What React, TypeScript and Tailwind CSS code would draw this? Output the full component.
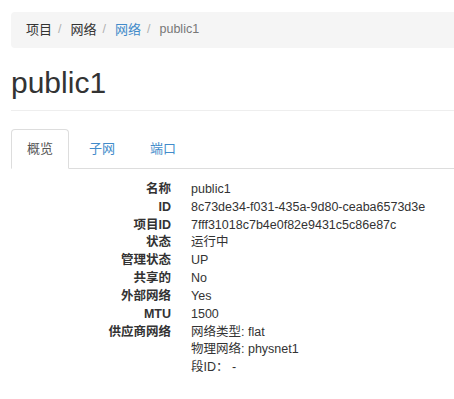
import React from "react";

const font = { fontFamily: '"Liberation Sans", "Noto Sans CJK SC", sans-serif' };

const rows: { label: string; values: string[] }[] = [
  { label: "名称", values: ["public1"] },
  { label: "ID", values: ["8c73de34-f031-435a-9d80-ceaba6573d3e"] },
  { label: "项目ID", values: ["7fff31018c7b4e0f82e9431c5c86e87c"] },
  { label: "状态", values: ["运行中"] },
  { label: "管理状态", values: ["UP"] },
  { label: "共享的", values: ["No"] },
  { label: "外部网络", values: ["Yes"] },
  { label: "MTU", values: ["1500"] },
  { label: "供应商网络", values: ["网络类型: flat", "物理网络: physnet1", "段ID： -"] },
];

function Sep() {
  return <span className="pl-[6px] pr-[9px] text-[#b0b0b0]">/</span>;
}

export default function App() {
  return (
    <div className="w-[454px] h-[399px] overflow-hidden bg-white text-[#333333] text-[12.5px] leading-[1.428571]" style={font}>
      <div className="ml-[11px] w-[520px] pt-[12px]">
        <div className="h-[36px] flex items-center bg-[#f5f5f5] rounded-[4px] pl-[15px]">
          <span className="text-[#333333] text-[13px]">项目</span>
          <Sep />
          <span className="text-[#333333] text-[13px]">网络</span>
          <Sep />
          <span className="text-[#428bca] text-[13px]">网络</span>
          <Sep />
          <span className="text-[#777777]">public1</span>
        </div>
        <h1 className="mt-[18px] text-[30px] leading-[33px] pb-[11px] border-b border-[#eeeeee] text-[#333333] font-normal">
          public1
        </h1>
        <div className="mt-[18px] flex border-b border-[#dddddd]">
          <div className="-mb-px px-[15px] py-[10px] border border-[#dddddd] border-b-white bg-white rounded-t-[4px] text-[#555555] text-[13px] leading-[17.86px]">
            概览
          </div>
          <div className="-mb-px ml-[4px] px-[15px] py-[10px] border border-transparent text-[#428bca] text-[13px] leading-[17.86px]">
            子网
          </div>
          <div className="-mb-px ml-[3px] px-[15px] py-[10px] border border-transparent text-[#428bca] text-[13px] leading-[17.86px]">
            端口
          </div>
        </div>
        <div className="mt-[12px] flex flex-col">
          {rows.map((r) => (
            <div key={r.label} className="flex">
              <div className="w-[160px] text-right font-bold text-[#333333]">{r.label}</div>
              <div className="ml-[20px] flex flex-col text-[#333333]">
                {r.values.map((v) => (
                  <div key={v}>{v}</div>
                ))}
              </div>
            </div>
          ))}
        </div>
      </div>
    </div>
  );
}
